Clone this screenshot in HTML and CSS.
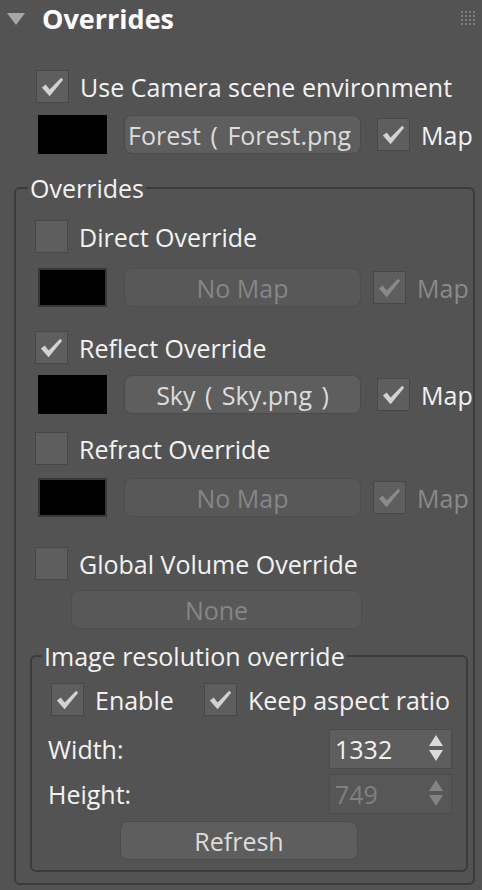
FILE: index.html
```html
<!DOCTYPE html>
<html lang="en">
<head>
<meta charset="utf-8">
<title>Overrides</title>
<link rel="stylesheet" href="styles.css">
</head>
<body>
<div class="panel">
  <div class="rollout-head">
    <span class="arrow"></span>
    <span class="rollout-title">Overrides</span>
    <svg class="grip" width="16" height="16" viewBox="0 0 16 16">
      <g fill="#7e7e7e">
        <rect x="0" y="0" width="2" height="2"/><rect x="4" y="0" width="2" height="2"/><rect x="8" y="0" width="2" height="2"/><rect x="12" y="0" width="2" height="2"/>
        <rect x="0" y="4" width="2" height="2"/><rect x="4" y="4" width="2" height="2"/><rect x="8" y="4" width="2" height="2"/><rect x="12" y="4" width="2" height="2"/>
        <rect x="0" y="8" width="2" height="2"/><rect x="4" y="8" width="2" height="2"/><rect x="8" y="8" width="2" height="2"/><rect x="12" y="8" width="2" height="2"/>
        <rect x="0" y="12" width="2" height="2"/><rect x="4" y="12" width="2" height="2"/><rect x="8" y="12" width="2" height="2"/><rect x="12" y="12" width="2" height="2"/>
      </g>
    </svg>
  </div>

  <div class="rollout-body">
    <div class="check-row first">
      <span class="check"><svg viewBox="0 0 32 32"><path d="M5 17 L9 14 L13 19 L25 7 L27 9 L13 26 Z"/></svg></span>
      <span class="label">Use Camera scene environment</span>
    </div>
    <div class="map-row top-map">
      <span class="swatch"></span>
      <button class="btn map-btn file clip">Forest ( Forest.png )</button>
      <span class="check map-check"><svg viewBox="0 0 32 32"><path d="M5 17 L9 14 L13 19 L25 7 L27 9 L13 26 Z"/></svg></span>
      <span class="label">Map</span>
    </div>

    <fieldset class="group outer">
      <legend>Overrides</legend>

      <div class="check-row r-direct">
        <span class="check"></span>
        <span class="label">Direct Override</span>
      </div>
      <div class="map-row off r-map1">
        <span class="swatch"></span>
        <button class="btn map-btn" disabled>No Map</button>
        <span class="check map-check"><svg viewBox="0 0 32 32"><path d="M5 17 L9 14 L13 19 L25 7 L27 9 L13 26 Z"/></svg></span>
        <span class="label">Map</span>
      </div>

      <div class="check-row r-reflect">
        <span class="check"><svg viewBox="0 0 32 32"><path d="M5 17 L9 14 L13 19 L25 7 L27 9 L13 26 Z"/></svg></span>
        <span class="label">Reflect Override</span>
      </div>
      <div class="map-row r-map2">
        <span class="swatch"></span>
        <button class="btn map-btn file">Sky ( Sky.png )</button>
        <span class="check map-check"><svg viewBox="0 0 32 32"><path d="M5 17 L9 14 L13 19 L25 7 L27 9 L13 26 Z"/></svg></span>
        <span class="label">Map</span>
      </div>

      <div class="check-row r-refract">
        <span class="check"></span>
        <span class="label">Refract Override</span>
      </div>
      <div class="map-row off r-map3">
        <span class="swatch"></span>
        <button class="btn map-btn" disabled>No Map</button>
        <span class="check map-check"><svg viewBox="0 0 32 32"><path d="M5 17 L9 14 L13 19 L25 7 L27 9 L13 26 Z"/></svg></span>
        <span class="label">Map</span>
      </div>

      <div class="check-row r-global">
        <span class="check"></span>
        <span class="label">Global Volume Override</span>
      </div>
      <button class="btn volume-btn" disabled>None</button>

      <fieldset class="group inner">
        <legend>Image resolution override</legend>

        <div class="check-row r-enable">
          <span class="check-item enable">
            <span class="check"><svg viewBox="0 0 32 32"><path d="M5 17 L9 14 L13 19 L25 7 L27 9 L13 26 Z"/></svg></span>
            <span class="label">Enable</span>
          </span>
          <span class="check-item">
            <span class="check"><svg viewBox="0 0 32 32"><path d="M5 17 L9 14 L13 19 L25 7 L27 9 L13 26 Z"/></svg></span>
            <span class="label">Keep aspect ratio</span>
          </span>
        </div>

        <div class="size-row r-width">
          <span class="label">Width:</span>
          <div class="spinner">
            <span class="value">1332</span>
            <svg class="arrows" width="14" height="28" viewBox="0 0 14 28"><path d="M7 0 L14 11 L0 11 Z M0 15 L14 15 L7 26 Z"/></svg>
          </div>
        </div>
        <div class="size-row r-height">
          <span class="label">Height:</span>
          <div class="spinner off">
            <span class="value">749</span>
            <svg class="arrows" width="14" height="28" viewBox="0 0 14 28"><path d="M7 0 L14 11 L0 11 Z M0 15 L14 15 L7 26 Z"/></svg>
          </div>
        </div>

        <button class="btn refresh-btn">Refresh</button>
      </fieldset>
    </fieldset>
  </div>
</div>
</body>
</html>
```

FILE: styles.css
```css
body {
  margin: 0;
  background: #535353;
}

.panel {
  width: 482px;
  height: 890px;
  overflow: hidden;
  font-family: "Open Sans", "Noto Sans", sans-serif;
  font-size: 25px;
  color: #f2f2f2;
}

/* rollout title bar */
.rollout-head {
  height: 38px;
  display: flex;
  align-items: center;
}

.arrow {
  margin-left: 7px;
  width: 0;
  height: 0;
  border-left: 9px solid transparent;
  border-right: 9px solid transparent;
  border-top: 12px solid #a6a6a6;
}

.rollout-title {
  margin-left: 17px;
  font-weight: bold;
  font-size: 27px;
  line-height: 30px;
  color: #ffffff;
}

.grip {
  margin-left: auto;
  margin-right: 5px;
}

.rollout-body {
  padding: 0 7px 0 14px;
}

/* checkbox rows */
.check-row {
  display: flex;
  align-items: center;
  height: 33px;
  margin-left: 21px;
}

.check-row .label {
  margin-left: 11px;
  white-space: nowrap;
}

.check {
  box-sizing: border-box;
  flex: none;
  width: 33px;
  height: 33px;
  background: #5e5e5e;
  border: 1px solid #474747;
}

.check svg {
  display: block;
  width: 31px;
  height: 31px;
  fill: #d2d2d2;
}

.first {
  margin-top: 32px;
  margin-left: 22px;
}

/* colour swatch + map button rows */
.map-row {
  display: flex;
  align-items: center;
  height: 39px;
  margin-left: 24px;
}

.top-map {
  margin-top: 12px;
}

.swatch {
  box-sizing: border-box;
  flex: none;
  width: 69px;
  height: 39px;
  background: #000;
}

.btn {
  box-sizing: border-box;
  height: 39px;
  padding: 0 3px;
  font: inherit;
  color: #dcdcdc;
  background: #5e5e5e;
  border: 1px solid #4b4b4b;
  border-radius: 8px;
  white-space: nowrap;
  overflow: hidden;
}

.btn:disabled {
  color: #868686;
  background: #585858;
  border-color: #4d4d4d;
}

.map-btn {
  flex: none;
  margin-left: 17px;
  width: 237px;
}

/* "name ( file )" labels get a wider gap round the brackets */
.map-btn.file {
  word-spacing: 3px;
}

.map-btn.clip {
  text-align: left;
}

.map-check {
  margin-left: 16px;
}

.map-row .label {
  margin-left: 11px;
}

.map-row.off .swatch {
  border: 2px solid #383838;
}

.map-row.off .map-check {
  margin-left: 12px;
}

.map-row.off .check svg {
  fill: #8a8a8a;
}

.map-row.off .label {
  color: #8a8a8a;
}

/* group boxes */
.group {
  margin: 0;
  padding: 0;
  min-width: 0;
  border: 2px solid #3b3b3b;
  border-radius: 6px;
}

.group legend {
  padding: 0 2px;
  line-height: 26px;
}

.outer {
  margin-top: 21px;
  padding-bottom: 11px;
}

.outer > legend {
  margin-left: 12px;
}

.outer > .check-row {
  margin-left: 19px;
}

.outer > .map-row {
  margin-left: 22px;
}

.r-direct { margin-top: 19px; }
.r-map1 { margin-top: 15px; }
.r-reflect { margin-top: 24px; }
.r-map2 { margin-top: 11px; }
.r-refract { margin-top: 18px; }
.r-map3 { margin-top: 13px; }
.r-global { margin-top: 30px; }

.volume-btn {
  display: block;
  margin: 10px 0 0 55px;
  width: 291px;
}

.inner {
  margin: 14px 5px 0 14px;
  padding-bottom: 10px;
}

.inner > legend {
  margin-left: 10px;
}

.r-enable {
  margin-top: 14px;
  margin-left: 19px;
}

.check-item {
  display: flex;
  align-items: center;
}

.check-item.enable {
  width: 153px;
}

/* width / height spinners */
.size-row {
  display: flex;
  align-items: center;
  justify-content: space-between;
  height: 40px;
  margin: 0 14px 0 16px;
}

.r-width { margin-top: 13px; }
.r-height { margin-top: 5px; }

.spinner {
  box-sizing: border-box;
  width: 123px;
  height: 40px;
  display: flex;
  align-items: center;
  justify-content: space-between;
  padding: 0 8px 0 5px;
  background: #5e5e5e;
  border: 1px solid #4b4b4b;
}

.spinner .arrows {
  fill: #dadada;
}

.spinner.off {
  background: #575757;
}

.spinner.off .value {
  color: #808080;
}

.spinner.off .arrows {
  fill: #838383;
}

.refresh-btn {
  display: block;
  margin: 7px 0 0 88px;
  width: 238px;
}
```
